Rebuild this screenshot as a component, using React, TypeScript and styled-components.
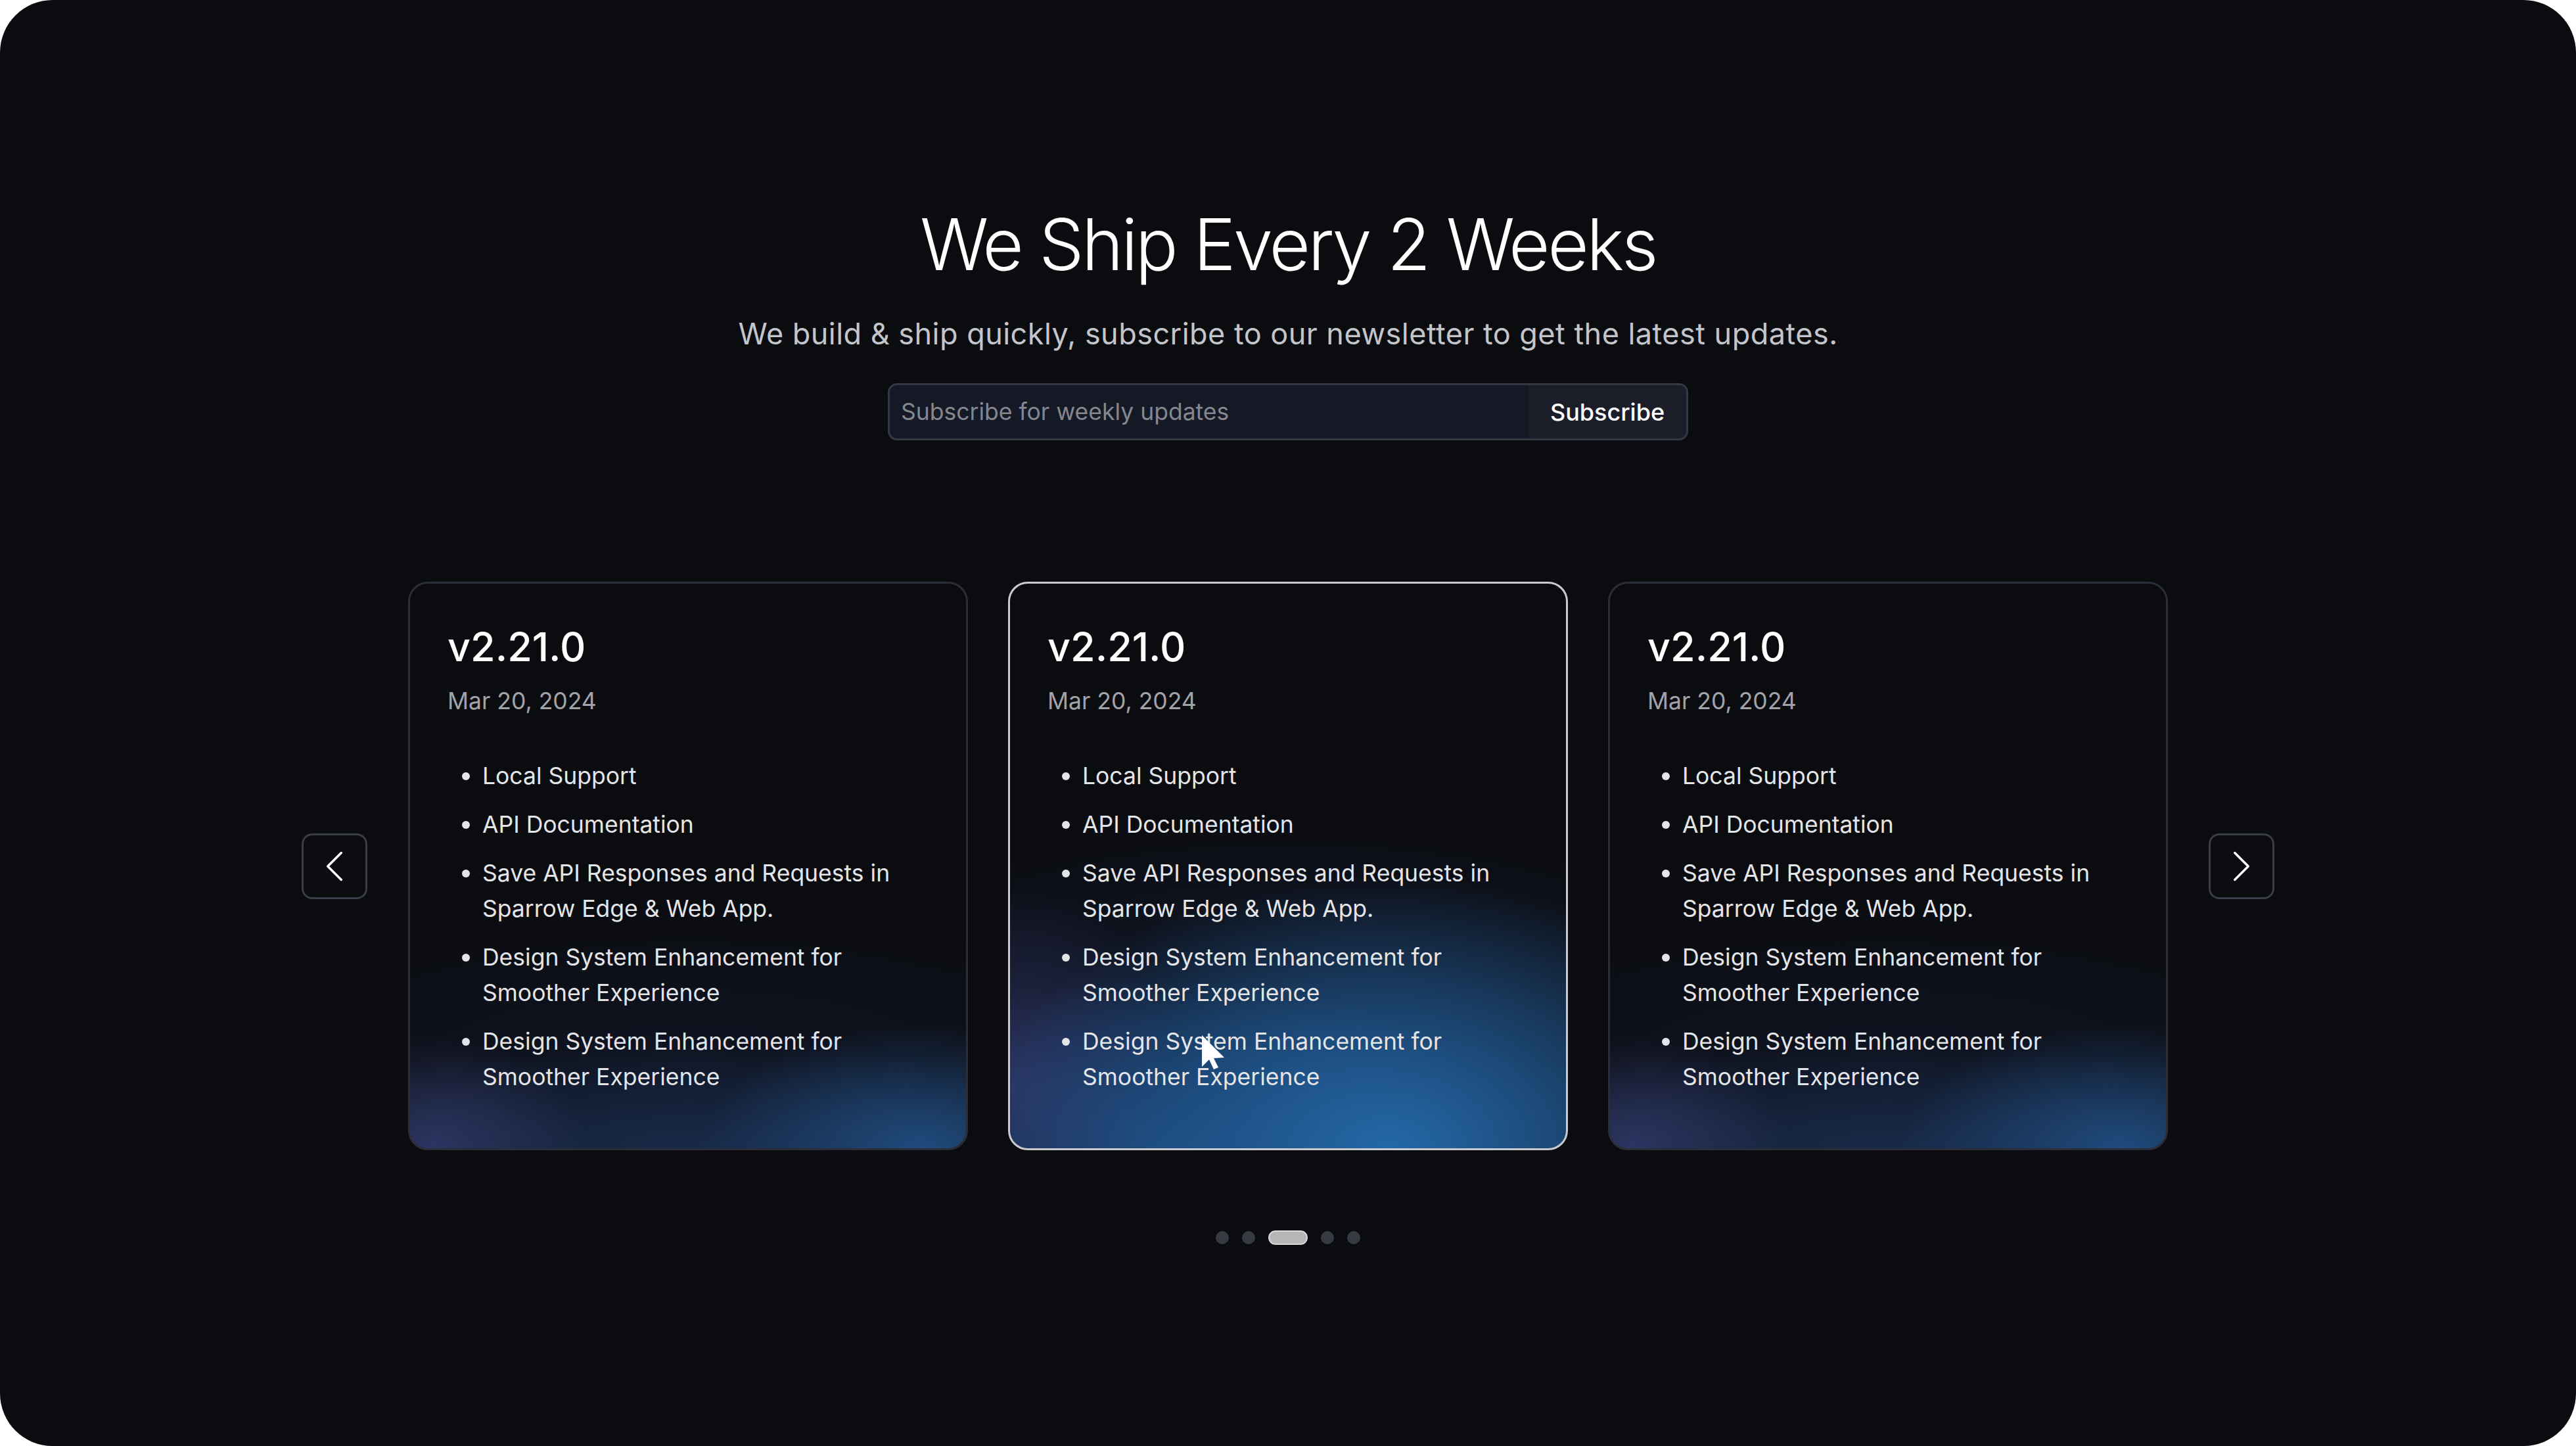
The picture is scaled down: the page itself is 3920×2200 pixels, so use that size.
import React from "react";
import styled, { createGlobalStyle } from "styled-components";
import { ChevronLeft, ChevronRight } from "lucide-react";

const GlobalStyle = createGlobalStyle`
  html, body {
    margin: 0;
    padding: 0;
    background: #ffffff;
  }
  * {
    box-sizing: border-box;
  }
`;

const Frame = styled.div`
  width: 3920px;
  height: 2200px;
  background: #0b0c10;
  border-radius: 80px;
  display: flex;
  flex-direction: column;
  align-items: center;
  padding-top: 300px;
  font-family: Inter, "Noto Sans", sans-serif;
  color: #ffffff;
  overflow: hidden;
`;

const Title = styled.h1`
  margin: 0;
  font-size: 108px;
  line-height: 144px;
  font-weight: 300;
  letter-spacing: -3.5px;
  color: #ffffff;
`;

const Subtitle = styled.p`
  margin: 35px 0 0;
  font-size: 45px;
  line-height: 58px;
  color: #c4c5cb;
  letter-spacing: 0.47px;
`;

const SubscribeForm = styled.form`
  margin-top: 46px;
  width: 1218px;
  height: 87px;
  display: flex;
  border: 3px solid #353843;
  border-radius: 14px;
  background: #151925;
  overflow: hidden;
`;

const EmailInput = styled.input`
  flex: 1;
  border: none;
  outline: none;
  background: transparent;
  padding: 0 17px;
  font-family: Inter, "Noto Sans", sans-serif;
  font-size: 35.5px;
  color: #ffffff;

  &::placeholder {
    color: #85878f;
  }
`;

const SubscribeButton = styled.button`
  width: 240px;
  border: none;
  background: #1b1e29;
  color: #ffffff;
  font-family: Inter, "Noto Sans", sans-serif;
  font-size: 36px;
  font-weight: 500;
  cursor: pointer;
`;

const Carousel = styled.div`
  margin-top: 215px;
  display: flex;
  align-items: center;
  gap: 62px;
`;

const NavButton = styled.button`
  width: 100px;
  height: 100px;
  border: 3px solid #3a3d48;
  border-radius: 16px;
  background: #0b0c10;
  color: #ffffff;
  display: flex;
  align-items: center;
  justify-content: center;
  padding: 0;
  cursor: pointer;
`;

const Track = styled.div`
  display: flex;
  gap: 61px;
`;

const Card = styled.div<{ $active?: boolean }>`
  position: relative;
  width: 852px;
  height: 865px;
  border-radius: 30px;
  border: 3px solid ${(p) => (p.$active ? "#c9cacf" : "#2b2e38")};
  padding: 58px 57px 0;
  overflow: hidden;
  background: ${(p) =>
    p.$active
      ? `radial-gradient(ellipse 75% 48% at 68% 100%, rgba(36, 104, 168, 1) 0%, rgba(33, 92, 150, 0.75) 40%, rgba(20, 50, 100, 0) 100%),
         radial-gradient(ellipse 30% 35% at 0% 88%, rgba(62, 66, 130, 0.55) 0%, rgba(40, 50, 110, 0) 100%),
         radial-gradient(ellipse 60% 30% at 30% 100%, rgba(30, 80, 140, 0.7) 0%, rgba(20, 50, 100, 0) 100%),
         radial-gradient(ellipse 100% 40% at 50% 80%, rgba(25, 45, 85, 0.45) 0%, rgba(20, 40, 80, 0) 100%),
         #0b0c10`
      : `radial-gradient(ellipse 28% 20% at 4% 100%, rgba(62, 70, 130, 0.6) 0%, rgba(40, 50, 110, 0) 100%),
         radial-gradient(ellipse 40% 22% at 92% 100%, rgba(36, 90, 150, 0.75) 0%, rgba(30, 70, 140, 0) 100%),
         radial-gradient(ellipse 90% 18% at 50% 100%, rgba(32, 62, 110, 0.55) 0%, rgba(20, 40, 80, 0) 100%),
         radial-gradient(ellipse 100% 32% at 50% 88%, rgba(25, 40, 75, 0.35) 0%, rgba(20, 40, 80, 0) 100%),
         #0b0c10`};
`;

const Version = styled.h2`
  margin: 0;
  font-size: 61px;
  line-height: 77px;
  font-weight: 500;
  color: #ffffff;
`;

const DateText = styled.div`
  margin-top: 20px;
  font-size: 35.5px;
  line-height: 48px;
  color: #a2a3a9;
`;

const Changes = styled.ul`
  margin: 61px 0 0;
  padding: 0 0 0 53px;
  list-style: disc;
`;

const Change = styled.li`
  font-size: 35.5px;
  line-height: 54px;
  color: #e4e5e8;
  margin-bottom: 18px;

  &::marker {
    font-size: 38px;
  }
`;

const Dots = styled.div`
  margin-top: 122px;
  display: flex;
  align-items: center;
  gap: 20px;
`;

const Dot = styled.span<{ $active?: boolean }>`
  width: ${(p) => (p.$active ? "60px" : "20px")};
  height: ${(p) => (p.$active ? "22px" : "20px")};
  border-radius: 12px;
  background: ${(p) => (p.$active ? "#b6b6b9" : "#373943")};
  border: ${(p) => (p.$active ? "2px solid #d8d8da" : "none")};
`;

const Pointer = styled.svg`
  position: absolute;
  left: 290px;
  top: 685px;
`;

const changes = [
  "Local Support",
  "API Documentation",
  "Save API Responses and Requests in Sparrow Edge & Web App.",
  "Design System Enhancement for Smoother Experience",
  "Design System Enhancement for Smoother Experience",
];

const Release = ({ active }: { active?: boolean }) => (
  <Card $active={active}>
    <Version>v2.21.0</Version>
    <DateText>Mar 20, 2024</DateText>
    <Changes>
      {changes.map((c, i) => (
        <Change key={i}>{c}</Change>
      ))}
    </Changes>
    {active && (
      <Pointer width="46" height="56" viewBox="0 0 46 56">
        <path d="M2 2 L2 50 L13 39 L20 54 L27 51 L20 37 L36 36 Z" fill="#ffffff" />
      </Pointer>
    )}
  </Card>
);

const App = () => {
  return (
    <>
      <GlobalStyle />
      <Frame>
        <Title>We Ship Every 2 Weeks</Title>
        <Subtitle>
          We build &amp; ship quickly, subscribe to our newsletter to get the latest updates.
        </Subtitle>
        <SubscribeForm onSubmit={(e) => e.preventDefault()}>
          <EmailInput placeholder="Subscribe for weekly updates" />
          <SubscribeButton type="submit">Subscribe</SubscribeButton>
        </SubscribeForm>
        <Carousel>
          <NavButton aria-label="Previous">
            <ChevronLeft size={82} strokeWidth={1} />
          </NavButton>
          <Track>
            <Release />
            <Release active />
            <Release />
          </Track>
          <NavButton aria-label="Next">
            <ChevronRight size={82} strokeWidth={1} />
          </NavButton>
        </Carousel>
        <Dots>
          <Dot />
          <Dot />
          <Dot $active />
          <Dot />
          <Dot />
        </Dots>
      </Frame>
    </>
  );
};

export default App;
